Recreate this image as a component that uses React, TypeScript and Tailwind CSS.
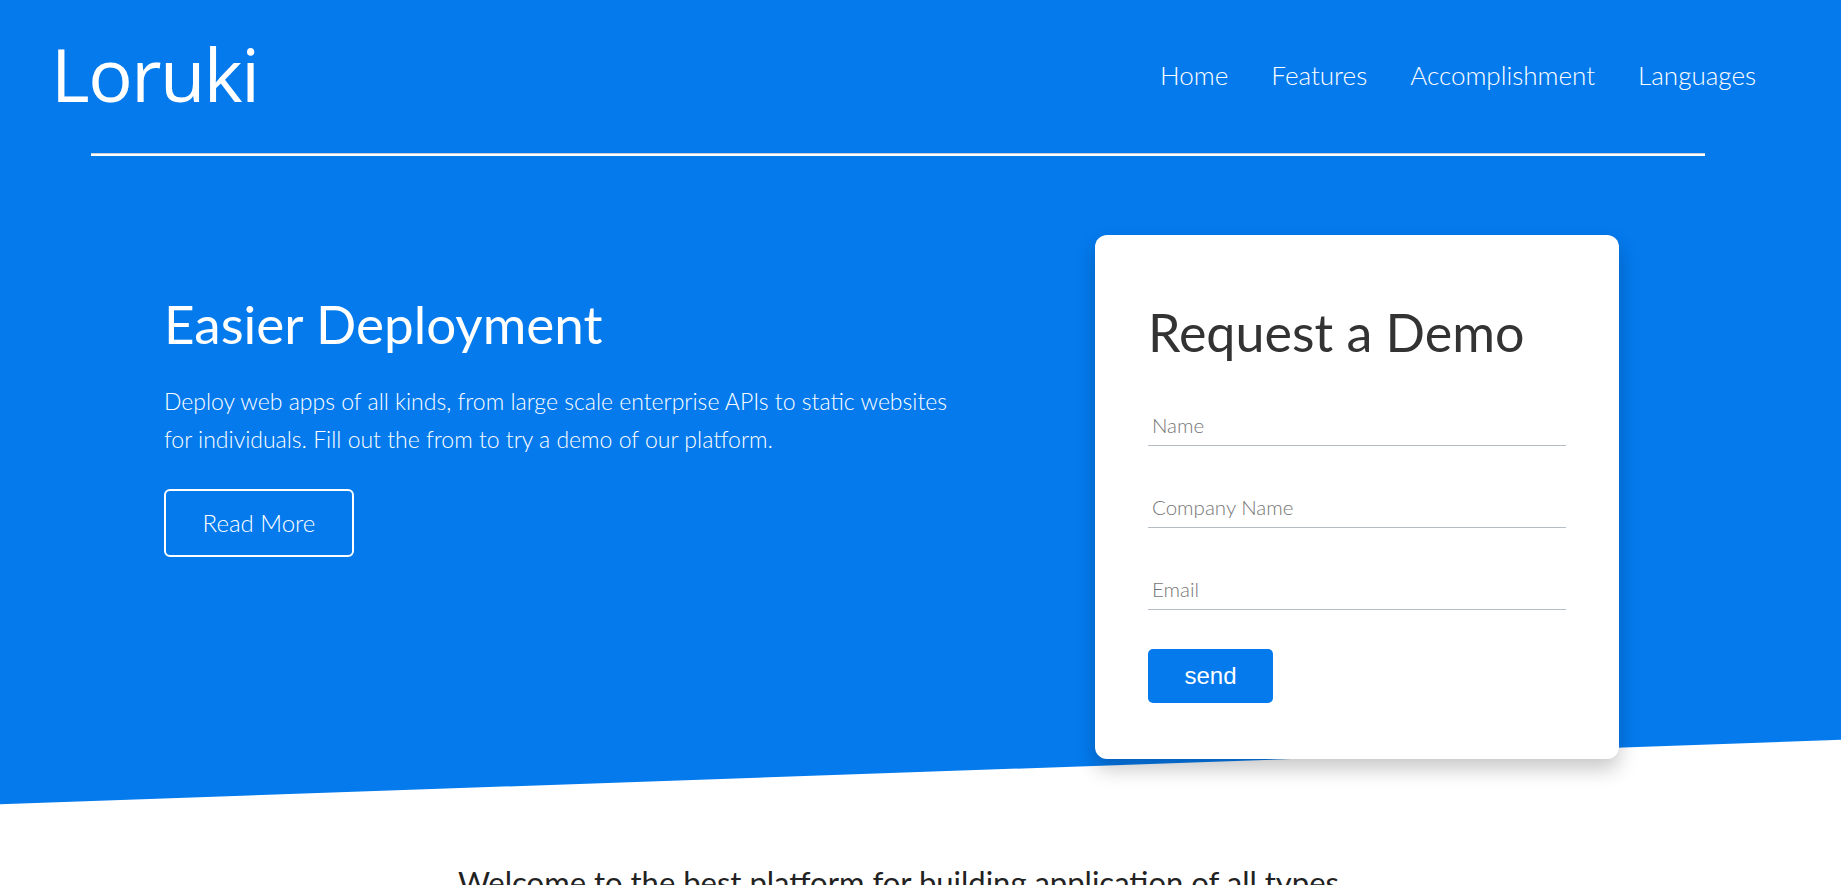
import React from "react";

export default function App() {
  return (
    <div className="min-h-screen bg-white font-['Lato',sans-serif] text-[#333]">
      <section className="relative h-[840px] overflow-hidden bg-[#047aed] text-white">
        <header className="flex items-center justify-between pl-[51px] pr-[85px] pt-[37px]">
          <div className="font-['Open_Sans',sans-serif] text-[74px] leading-none tracking-[-1.5px]">Loruki</div>
          <nav className="mt-[3px] flex gap-[43px] text-[26px] font-light leading-[1.2]">
            <a href="#">Home</a>
            <a href="#">Features</a>
            <a href="#">Accomplishment</a>
            <a href="#">Languages</a>
          </nav>
        </header>
        <div className="ml-[91px] mt-[42px] h-[3px] w-[1614px] border-t border-t-[#c9d2dc] bg-white" />

        <div className="relative z-10 mt-[79px] flex items-start">
          <div className="w-[1095px] pl-[164px] pt-[57px]">
            <h1 className="text-[53px] font-normal leading-[1.2]">Easier Deployment</h1>
            <p className="mt-[26px] max-w-[810px] text-[23px] font-light leading-[38px]">
              Deploy web apps of all kinds, from large scale enterprise APIs to static websites for individuals. Fill out the from to try a demo of our platform.
            </p>
            <button className="mt-[31px] flex h-[68px] w-[190px] items-center justify-center rounded-[6px] border-2 border-white text-[24px] font-light">
              Read More
            </button>
          </div>

          <div className="w-[524px] rounded-[12px] bg-white px-[53px] pb-[56px] pt-[66px] text-[#333] shadow-[0_10px_20px_rgba(0,0,0,0.22)]">
            <h2 className="text-[52px] font-normal leading-[1.2]">Request a Demo</h2>
            <form className="mt-[42px] flex flex-col gap-[41px]">
              <input
                type="text"
                placeholder="Name"
                className="w-full border-b border-b-[#b4bcc6] px-[4px] py-[8px] text-[20.5px] font-light leading-[24px] outline-none placeholder:text-[#767676]"
              />
              <input
                type="text"
                placeholder="Company Name"
                className="w-full border-b border-b-[#b4bcc6] px-[4px] py-[8px] text-[20.5px] font-light leading-[24px] outline-none placeholder:text-[#767676]"
              />
              <input
                type="email"
                placeholder="Email"
                className="w-full border-b border-b-[#b4bcc6] px-[4px] py-[8px] text-[20.5px] font-light leading-[24px] outline-none placeholder:text-[#767676]"
              />
            </form>
            <button className="mt-[39px] h-[54px] w-[125px] rounded-[5px] bg-[#047aed] font-['Liberation_Sans',Arial,sans-serif] text-[24px] text-white">
              send
            </button>
          </div>
        </div>

        <div className="absolute left-0 right-0 top-[772px] h-[200px] -skew-y-2 bg-white" />
      </section>

      <section className="pr-[44px] pt-[24px] text-center">
        <p className="text-[31px] font-normal leading-[1.2] text-[#222]">
          Welcome to the best platform for building application of all types
        </p>
      </section>
    </div>
  );
}
